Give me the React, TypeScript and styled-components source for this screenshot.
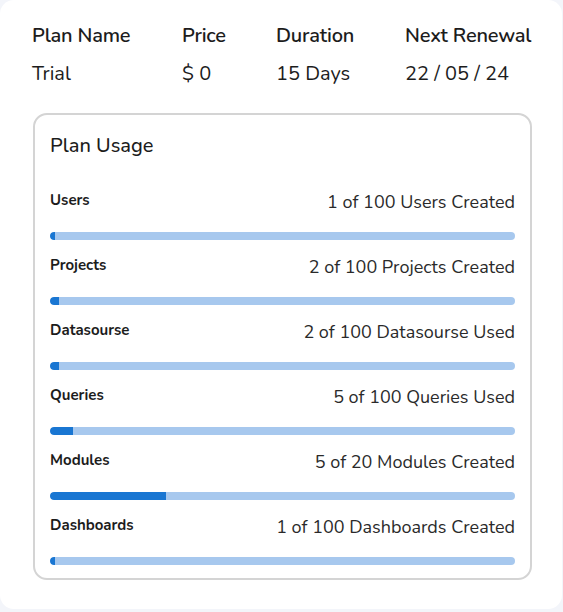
import React from 'react'
import styled, { createGlobalStyle } from 'styled-components'

const GlobalStyle = createGlobalStyle`
    html, body {
        margin: 0;
        padding: 0;
        background: #f3f5fa;
        font-family: 'Nunito', 'Lato', 'Noto Sans', sans-serif;
        color: #1c1c1c;
    }
`

const Card = styled.div`
    box-sizing: border-box;
    width: 562px;
    height: 609px;
    background: #fff;
    border-radius: 14px;
    padding: 22px 30px 0 32px;
`

const PlanGrid = styled.div`
    display: grid;
    grid-template-columns: 150px 94px 129px auto;
    row-gap: 10px;
    white-space: nowrap;
`

const HeadCell = styled.div`
    font-size: 20px;
    font-weight: 600;
    line-height: 28px;
    letter-spacing: -0.2px;
`

const ValueCell = styled.div`
    font-size: 20px;
    font-weight: 400;
    line-height: 28px;
`

const UsageBox = styled.div`
    box-sizing: border-box;
    margin-top: 25px;
    margin-left: 1px;
    width: 499px;
    height: 467px;
    border: 2px solid #d4d4d4;
    border-radius: 14px;
    padding: 17px 15px 0 15px;
`

const UsageTitle = styled.div`
    font-size: 20px;
    font-weight: 500;
    line-height: 28px;
    margin-bottom: 29px;
`

const UsageRow = styled.div`
    display: flex;
    flex-direction: column;
    height: 65px;
`

const RowHead = styled.div`
    display: flex;
    justify-content: space-between;
    align-items: flex-start;
    height: 30px;
`

const Label = styled.span`
    font-size: 15px;
    font-weight: 700;
    line-height: 22px;
`

const Count = styled.span`
    font-size: 18px;
    font-weight: 400;
    line-height: 27px;
    color: #2a2a2a;
`

const Track = styled.div`
    margin-top: 13px;
    height: 8px;
    border-radius: 4px;
    background: #a7c8ee;
    overflow: hidden;
`

const Fill = styled.div`
    height: 100%;
    background: #1976d2;
    border-radius: 4px 0 0 4px;
`

const plan = [
    { head: 'Plan Name', value: 'Trial' },
    { head: 'Price', value: '$ 0' },
    { head: 'Duration', value: '15 Days' },
    { head: 'Next Renewal', value: '22 / 05 / 24' },
]

const usage = [
    { label: 'Users', used: 1, total: 100, text: 'Users Created' },
    { label: 'Projects', used: 2, total: 100, text: 'Projects Created' },
    { label: 'Datasourse', used: 2, total: 100, text: 'Datasourse Used' },
    { label: 'Queries', used: 5, total: 100, text: 'Queries Used' },
    { label: 'Modules', used: 5, total: 20, text: 'Modules Created' },
    { label: 'Dashboards', used: 1, total: 100, text: 'Dashboards Created' },
]

const App = () => (
    <>
        <GlobalStyle />
        <Card>
            <PlanGrid>
                {plan.map(p => <HeadCell key={p.head}>{p.head}</HeadCell>)}
                {plan.map(p => <ValueCell key={p.head}>{p.value}</ValueCell>)}
            </PlanGrid>
            <UsageBox>
                <UsageTitle>Plan Usage</UsageTitle>
                {usage.map(u => (
                    <UsageRow key={u.label}>
                        <RowHead>
                            <Label>{u.label}</Label>
                            <Count>{`${u.used} of ${u.total} ${u.text}`}</Count>
                        </RowHead>
                        <Track>
                            <Fill style={{ width: `${(u.used / u.total) * 100}%` }} />
                        </Track>
                    </UsageRow>
                ))}
            </UsageBox>
        </Card>
    </>
)

export default App
